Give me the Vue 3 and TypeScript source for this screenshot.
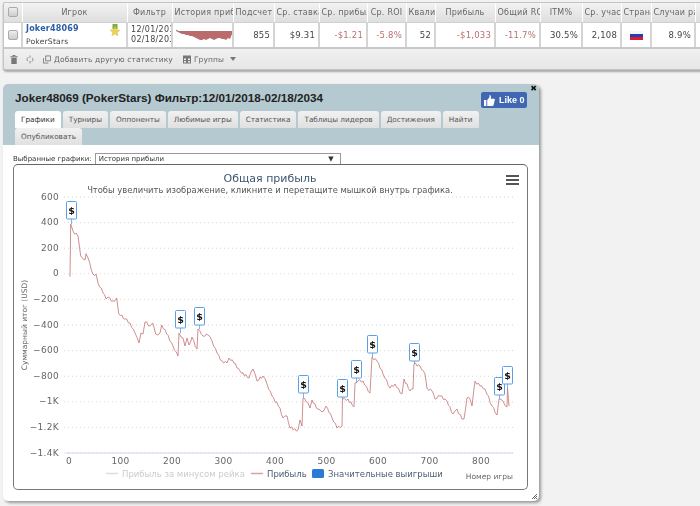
<template>
  <div class="page">
    <section class="stats-card">
      <table class="stats">
        <colgroup>
          <col v-for="c in columns" :key="c.title" :style="{ width: c.width + 'px' }" />
        </colgroup>
        <thead>
          <tr>
            <th v-for="c in columns" :key="c.title">
              <span v-if="c.check" class="check"></span>
              <template v-else>{{ c.title }}</template>
            </th>
          </tr>
        </thead>
        <tbody>
          <tr>
            <td class="center"><span class="check"></span></td>
            <td class="player">
              <a>Joker48069</a>
              <span>PokerStars</span>
              <svg class="badge" viewBox="0 0 10 13">
                <rect x="2.5" y="0" width="5" height="5" fill="#7fae3c" />
                <path d="M5 2.5l1.5 3.2 3.4.4-2.5 2.3.7 3.4L5 10.1l-3.1 1.7.7-3.4L.1 6.1l3.4-.4z" fill="#f0cf5a" stroke="#d9b63f" stroke-width=".4" />
              </svg>
            </td>
            <td class="dates">12/01/2018<br />02/18/2034</td>
            <td class="spark-cell">
              <svg viewBox="0 0 58 14" width="58" height="14">
                <path d="M1 2l2 1" stroke="#5aa650" fill="none" />
                <polygon :points="sparkPoints" fill="#bb6b6b" />
              </svg>
            </td>
            <td class="num">855</td>
            <td class="num">$9.31</td>
            <td class="num neg">-$1.21</td>
            <td class="num neg">-5.8%</td>
            <td class="num">52</td>
            <td class="num neg">-$1,033</td>
            <td class="num neg">-11.7%</td>
            <td class="num">30.5%</td>
            <td class="num">2,108</td>
            <td class="center"><span class="flag"></span></td>
            <td class="num">8.9%</td>
            <td></td>
          </tr>
        </tbody>
      </table>
      <div class="toolbar">
        <svg class="tool trash" viewBox="0 0 8 10"><path d="M0 1.5h8v1H0zM2.5 0h3v1h-3zM1 3h6v7H1z" fill="#777" /></svg>
        <svg class="tool refresh" viewBox="0 0 10 10"><path d="M2 7a3.4 3.4 0 0 1 1-5M8 3a3.4 3.4 0 0 1-1 5M5 0v3M5 7v3" fill="none" stroke="#888" stroke-width="1.1" /></svg>
        <span class="tool-text add">
          <svg class="tool" viewBox="0 0 9 9"><path d="M3 .5h5.5v5.5H3zM.5 3v5.5H6" fill="none" stroke="#777" /></svg>
          Добавить другую статистику
        </span>
        <span class="tool-text groups">
          <svg class="tool" viewBox="0 0 8 8"><path d="M0 0h8v8H0z" fill="#777" /><path d="M1 3h2v1.5H1zM5 3h2v1.5H5zM1 5.5h2V7H1zM5 5.5h2V7H5z" fill="#eee" /></svg>
          Группы
        </span>
        <span class="caret"></span>
      </div>
    </section>

    <section class="window">
      <header class="window-head">
        <h1>Joker48069 (PokerStars) Фильтр:12/01/2018-02/18/2034</h1>
        <a class="like">
          <svg viewBox="0 0 12 12" width="11" height="11"><path d="M0 5.5h2.5V12H0zM3.5 5.5L6 2.5V0c1.500 0 2 1.500 1.500 4H11c1 0 1 1.500.6 2L10.500 11c-.2.7-.6 1-1.500 1H3.500z" fill="#fff" /></svg>
          <span>Like 0</span>
        </a>
        <span class="close">✖</span>
        <nav class="tabs">
          <a v-for="(t, i) in tabs" :key="t" :class="{ active: i === 0 }">{{ t }}</a>
        </nav>
      </header>
      <div class="window-body">
        <div class="picker">
          <label>Выбранные графики:</label>
          <div class="select">История прибыли<span>▼</span></div>
        </div>
        <div class="chart">
          <svg viewBox="14 164 513 324" width="513" height="324">
            <line v-for="t in yTicks" :key="t.label" class="grid" x1="64" x2="513" :y1="t.y" :y2="t.y" />
            <line x1="66" x2="513" y1="452" y2="452" stroke="#ccd6eb" />
            <text v-for="t in yTicks" :key="t.label + 'l'" class="tick" x="59" :y="t.y + 2.5" text-anchor="end">{{ t.label }}</text>
            <text v-for="t in xTicks" :key="t.label" class="tick" :x="t.x" y="463" text-anchor="middle">{{ t.label }}</text>
            <text class="title" x="270" y="181" text-anchor="middle">Общая прибыль</text>
            <text class="subtitle" x="270" y="192" text-anchor="middle">Чтобы увеличить изображение, кликните и перетащите мышкой внутрь графика.</text>
            <text class="axis-name" transform="translate(27 324) rotate(-90)" text-anchor="middle">Суммарный итог (USD)</text>
            <text class="axis-name" x="513" y="478" text-anchor="end">Номер игры</text>

            <polyline :points="linePoints" fill="none" stroke="#c77b7b" stroke-width="1" stroke-opacity=".85" stroke-linejoin="round" />

            <g v-for="f in flags" :key="f.x">
              <line :x1="f.x + 5" :x2="f.x + 5" :y1="f.y + 17" :y2="f.tip" stroke="#4a90e2" stroke-opacity=".7" />
              <rect :x="f.x" :y="f.y" width="10" height="17.500" fill="#fff" stroke="#5a9fe8" stroke-width="1" rx="1" />
              <text class="flag-text" :x="f.x + 5" :y="f.y + 12.500" text-anchor="middle">$</text>
            </g>

            <g class="menu" fill="#555">
              <rect x="506" y="174" width="13" height="2" />
              <rect x="506" y="178" width="13" height="2" />
              <rect x="506" y="182" width="13" height="2" />
            </g>

            <line x1="106" x2="118" y1="472.500" y2="472.500" stroke="#ddd" stroke-width="1.500" />
            <text class="legend off" x="122" y="476">Прибыль за минусом рейка</text>
            <line x1="251" x2="263" y1="472.500" y2="472.500" stroke="#d8a3a3" stroke-width="1.500" />
            <text class="legend" x="267" y="476">Прибыль</text>
            <rect x="312" y="468" width="12" height="9" rx="1.500" fill="#2b7bd6" />
            <text class="legend" x="328" y="476">Значительные выигрыши</text>
          </svg>
        </div>
        <svg class="grip" viewBox="0 0 7 7" width="7" height="7"><path d="M6 1L1 6M6 3L3 6M6 5L5 6" stroke="#666" /></svg>
      </div>
    </section>
  </div>
</template>

<script setup lang="ts">
interface Column {
  title: string
  width: number
  check?: boolean
}

const columns: Column[] = [
  { title: '', width: 18, check: true },
  { title: 'Игрок', width: 105 },
  { title: 'Фильтр', width: 45 },
  { title: 'История приб', width: 61 },
  { title: 'Подсчет', width: 41 },
  { title: 'Ср. ставка', width: 45 },
  { title: 'Ср. прибыль', width: 48 },
  { title: 'Ср. ROI', width: 39 },
  { title: 'Квали', width: 29 },
  { title: 'Прибыль', width: 60 },
  { title: 'Общий ROI', width: 45 },
  { title: 'ITM%', width: 42 },
  { title: 'Ср. участ', width: 39 },
  { title: 'Страна', width: 30 },
  { title: 'Случаи ра', width: 44 },
  { title: 'С', width: 40 }
]

const tabs = ['Графики', 'Турниры', 'Оппоненты', 'Любимые игры', 'Статистика', 'Таблицы лидеров', 'Достижения', 'Найти', 'Опубликовать']

const yTicks = ['600', '400', '200', '0', '−200', '−400', '−600', '−800', '−1K', '−1.2K', '−1.4K'].map((label, i) => ({
  label,
  y: 196 + i * 25.6
}))

const xTicks = [0, 100, 200, 300, 400, 500, 600, 700, 800].map((v) => ({
  label: String(v),
  x: 69 + v * 0.515
}))

const flags = [
  { x: 66.5, y: 200.5, tip: 223 },
  { x: 175.5, y: 309.5, tip: 332 },
  { x: 194.5, y: 306.5, tip: 328 },
  { x: 298.5, y: 374.5, tip: 397 },
  { x: 337.5, y: 378.5, tip: 398 },
  { x: 351.5, y: 359.5, tip: 382 },
  { x: 367.5, y: 334.5, tip: 356 },
  { x: 409.5, y: 342.5, tip: 363 },
  { x: 494.5, y: 376.5, tip: 398 },
  { x: 502.5, y: 365.5, tip: 387 }
]

const trace: [number, number][] = [
  [70, 275.7], [70.7, 223], [73, 230], [78, 235], [80.7, 255], [85, 259], [86, 252.7], [88, 257], [93, 273], [96, 273],
  [98, 282], [103, 292], [106, 298], [108, 296], [113, 300], [116.7, 297], [118.7, 312.7], [125, 318], [130, 322], [135, 332],
  [139, 342], [141, 332], [143, 333], [145, 321], [150, 325], [152.7, 322], [155.7, 333], [160, 332], [161.7, 324], [166.7, 333],
  [173, 345], [178, 355], [179, 332], [183, 337], [185, 345], [187, 337], [189, 344], [192, 336], [197, 348], [198, 328],
  [203, 335], [208, 334], [212, 340], [217, 352], [222, 360], [227, 362], [229, 357], [234, 362], [240, 370], [249, 377],
  [252, 369], [253, 368], [257, 380], [263, 375], [267, 383], [272, 395], [280, 407], [283, 417], [287, 415], [290, 427],
  [298, 429], [300, 419], [302, 425], [303, 397], [308, 402], [310, 407], [312, 399], [318, 408], [322, 411], [326, 405],
  [332, 417], [337, 427], [342, 425], [342.5, 398], [348, 398], [354, 406], [355, 382], [358, 380], [363, 380], [370, 392],
  [372, 356], [377, 360], [383, 373], [390, 387], [395, 383], [402, 393], [404, 378], [410, 390], [413, 388], [414, 363],
  [420, 365], [425, 373], [427, 387], [432, 390], [435, 398], [440, 395], [447, 400], [453, 413], [457, 408], [462, 418],
  [464, 418], [467, 397], [470, 398], [472, 405], [475, 380], [480, 385], [485, 388], [492, 405], [497, 414], [499, 398],
  [503, 400], [507, 406], [507.5, 387], [509, 405]
]

// the traced points are sparse, the real series has a point per game, so roughen the long segments
const wiggle = [-1.4, 1.1, -0.6, 1.5, -1.1, 0.7]
const linePoints = trace
  .flatMap(([x, y], i) => {
    const next = trace[i + 1]
    if (!next || next[0] - x < 3) return [`${x},${y}`]
    const steps = Math.floor((next[0] - x) / 1.5)
    const out = [`${x},${y}`]
    for (let s = 1; s < steps; s++) {
      const t = s / steps
      out.push(`${x + (next[0] - x) * t},${y + (next[1] - y) * t + wiggle[(i + s) % wiggle.length]}`)
    }
    return out
  })
  .join(' ')

const sparkTop = [3, 4, 5, 6, 6, 7, 7, 8, 8, 9, 10, 11, 12, 12, 11, 12, 11, 10, 11, 12, 11, 10, 10, 11, 11, 12, 10, 11, 6]
const sparkPoints = sparkTop.map((y, i) => `${1 + i * 2},${y}`).join(' ') + ' 57,3 1,3'
</script>

<style>
html,
body {
  margin: 0;
  height: 506px;
  overflow: hidden;
  background: #f2f2f2;
}
</style>

<style scoped>
.page {
  width: 700px;
  height: 506px;
  overflow: hidden;
  padding: 2px 0 0 3px;
  box-sizing: border-box;
  font-family: "DejaVu Sans", Verdana, sans-serif;
  filter: blur(0.3px);
}

.stats-card {
  width: 760px;
  border: 1px solid #c4c4c4;
  border-radius: 0 0 4px 4px;
  background: #ececec;
  box-shadow: 0 2px 2px #a9a9a9;
}

.stats {
  table-layout: fixed;
  border-collapse: collapse;
  width: 731px;
  font-size: 8px;
  color: #444;
}

.stats th {
  height: 18px;
  padding: 0 2px 1px;
  overflow: hidden;
  white-space: nowrap;
  font-weight: normal;
  color: #666;
  letter-spacing: 0.25px;
  background: linear-gradient(#f2f2f2, #dedede);
  border-right: 1px solid #fff;
  border-bottom: 1px solid #d0d0d0;
}

.stats td {
  height: 24px;
  padding: 0 3px;
  overflow: hidden;
  white-space: nowrap;
  background: #fff;
  border-right: 2px solid #d4d4d4;
  border-bottom: 2px solid #c8c8c8;
  font-size: 8.5px;
  letter-spacing: 0.2px;
}

.check {
  display: inline-block;
  width: 8px;
  height: 8px;
  border: 1px solid #aaa;
  border-radius: 2px;
  background: linear-gradient(#eee, #ccc);
  vertical-align: middle;
}

.center {
  text-align: center;
}

.stats td.player {
  position: relative;
  padding-left: 3px;
}

.player a {
  display: block;
  color: #2a5ea8;
  font-weight: bold;
  font-size: 8px;
  margin-bottom: 4px;
}

.player span {
  display: block;
  font-size: 7.6px;
}

.badge {
  position: absolute;
  top: 1px;
  right: 6px;
  width: 10px;
  height: 13px;
}

.stats td.dates {
  padding: 0 0 0 3px;
  line-height: 10px;
  font-size: 8px;
  letter-spacing: 0.3px;
}

.stats td.spark-cell {
  padding: 0 2px;
  line-height: 0;
}

.num {
  text-align: right;
}

.neg {
  color: #bb7070;
}

.flag {
  display: inline-block;
  width: 13px;
  height: 9px;
  vertical-align: middle;
  background: linear-gradient(#f4f4f4 33%, #1f3fb5 33%, #1f3fb5 66%, #e0182d 66%);
}

.toolbar {
  display: flex;
  align-items: center;
  height: 20px;
  padding-left: 6px;
  background: linear-gradient(#f0f0f0, #e6e6e6);
  font-size: 7.5px;
  letter-spacing: 0.1px;
  color: #666;
}

.tool {
  width: 8px;
  height: 9px;
  flex: none;
}

.refresh {
  margin-left: 8px;
}

.tool-text {
  display: inline-flex;
  align-items: center;
  gap: 3px;
  white-space: nowrap;
}

.add {
  margin-left: 9px;
}

.groups {
  margin-left: 10px;
}

.caret {
  margin-left: 6px;
  border-left: 3px solid transparent;
  border-right: 3px solid transparent;
  border-top: 4px solid #777;
}

.window {
  width: 536px;
  height: 417px;
  margin-top: 14px;
  border-radius: 5px;
  background: #fff;
  box-shadow: 2px 2px 3px #999;
  display: flex;
  flex-direction: column;
}

.window-head {
  position: relative;
  height: 61px;
  padding: 7px 50px 0 12px;
  box-sizing: border-box;
  flex: none;
  border-radius: 5px 5px 0 0;
  background: #b4c9d0;
}

h1 {
  margin: 0 0 6px;
  font: bold 11.7px "Liberation Sans", Arial, sans-serif;
  line-height: 14px;
  color: #222;
  white-space: nowrap;
}

.like {
  position: absolute;
  top: 8px;
  right: 12px;
  display: flex;
  align-items: center;
  gap: 4px;
  width: 46px;
  height: 16px;
  box-sizing: border-box;
  padding-left: 3px;
  border-radius: 2px;
  background: #4267b2;
  color: #fff;
  font: bold 9px "Liberation Sans", Arial, sans-serif;
  white-space: nowrap;
}

.close {
  position: absolute;
  top: 0;
  right: 2px;
  font-size: 8px;
  color: #111;
}

.tabs {
  display: flex;
  flex-wrap: wrap;
  gap: 0 2px;
  width: 470px;
}

.tabs a {
  height: 17px;
  line-height: 17px;
  padding: 0 6px;
  font-size: 7.3px;
  color: #555;
  border-radius: 3px 3px 0 0;
  background: linear-gradient(#f1f1f1, #e0e0e0);
}

.tabs a.active {
  background: #fff;
  color: #333;
}

.window-body {
  position: relative;
  flex: 1;
  padding: 8px 10px 0;
}

.picker {
  display: flex;
  align-items: center;
  gap: 3px;
  height: 11px;
  font-size: 7px;
  color: #333;
}

.select {
  display: flex;
  justify-content: space-between;
  width: 246px;
  height: 11px;
  line-height: 10px;
  padding: 0 6px 0 3px;
  box-sizing: border-box;
  border: 1px solid #999;
  border-bottom: none;
  background: #fff;
}

.chart {
  width: 513px;
  height: 324px;
  border: 1px solid #777;
  border-top-color: #666;
  border-radius: 5px;
  overflow: hidden;
}

.chart svg {
  display: block;
}

.grid {
  stroke: #d6d6d6;
  stroke-dasharray: 1 3;
}

.tick {
  font-size: 9px;
  fill: #666;
  letter-spacing: 0.3px;
}

.title {
  font-size: 11px;
  fill: #3e576f;
}

.subtitle {
  font-size: 8.4px;
  fill: #555;
}

.axis-name {
  font-size: 7.500px;
  fill: #666;
}

.flag-text {
  font-size: 9.500px;
  font-weight: bold;
  fill: #111;
}

.legend {
  font-size: 8.500px;
  fill: #4a5f75;
}

.legend.off {
  fill: #ccc;
}

.grip {
  position: absolute;
  right: 1px;
  bottom: 1px;
}
</style>
